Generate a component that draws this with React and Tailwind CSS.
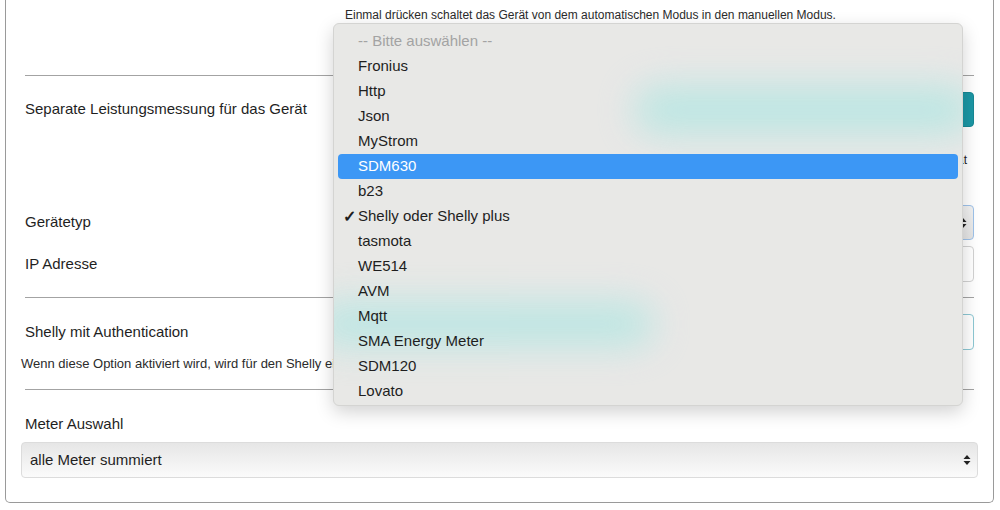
import React from "react";

const options = [
  "-- Bitte auswählen --",
  "Fronius",
  "Http",
  "Json",
  "MyStrom",
  "SDM630",
  "b23",
  "Shelly oder Shelly plus",
  "tasmota",
  "WE514",
  "AVM",
  "Mqtt",
  "SMA Energy Meter",
  "SDM120",
  "Lovato",
];

const Arrows = ({ className = "" }) => (
  <svg width="8" height="12" viewBox="0 0 8 12" className={className}>
    <path d="M4 1 L7.5 5 L0.5 5 Z" fill="#222" />
    <path d="M4 11 L7.5 7 L0.5 7 Z" fill="#222" />
  </svg>
);

const Hr = () => <div className="h-px bg-[#a3a3a3]" />;

const Menu = () => (
  <div className="absolute left-[333px] top-[23px] w-[630px] h-[383px] overflow-hidden rounded-[6px] bg-[#e8e8e6] border border-[#d4d4d2] shadow-[0_6px_18px_rgba(0,0,0,0.18)] pt-[5px]">
    <div className="absolute left-[300px] top-[62px] w-[340px] h-[48px] rounded-full bg-[#b8e6e3] blur-[18px] opacity-90" />
    <div className="absolute left-[-20px] top-[278px] w-[340px] h-[44px] rounded-full bg-[#b8e6e3] blur-[18px] opacity-90" />
    <ul className="relative">
      {options.map((o, i) => {
        const active = o === "SDM630";
        const checked = o === "Shelly oder Shelly plus";
        return (
          <li
            key={o}
            className={`relative mx-[4px] h-[25px] flex items-center pl-[20px] rounded-[4px] text-[15px] ${
              active ? "bg-[#3c97f5] text-white" : i === 0 ? "text-[#a3a3a3]" : "text-[#1e1e1e]"
            }`}
          >
            {checked && <span className="absolute left-[5px] text-[16px] font-bold">✓</span>}
            {o}
          </li>
        );
      })}
    </ul>
  </div>
);

export default function App() {
  return (
    <div
      className="relative w-[1000px] h-[510px] overflow-hidden bg-white text-[#1f1f1f]"
      style={{ fontFamily: '"Liberation Sans", Arial, sans-serif' }}
    >
      <div className="ml-[5px] w-[989px] h-[503px] border-x border-b border-[#9a9a9a] rounded-b-[5px] px-[19px]">
        <div className="h-[75px] pl-[320px] pt-[6px] text-[12px] text-[#2b2b2b]">
          Einmal drücken schaltet das Gerät von dem automatischen Modus in den manuellen Modus.
        </div>
        <Hr />

        <div className="pt-[16px] flex items-center h-[51px]">
          <div className="w-[320px] text-[15px]">Separate Leistungsmessung für das Gerät</div>
          <div className="flex-1 h-[35px] rounded-[4px] bg-[#1b97a5] border border-[#168894]" />
        </div>
        <div className="h-[41px] pt-[25px] text-right pr-[7px] text-[12px] leading-[16px] whitespace-nowrap">
          Aktiviert eine separate Messung der Leistung über das ausgewählte Gerät
        </div>
        <div className="h-[72px] flex items-end">
          <div className="w-full flex items-center h-[35px]">
            <div className="w-[320px] text-[15px]">Gerätetyp</div>
            <div className="flex-1 h-[35px] rounded-[4px] border border-[#9ec2ea] bg-gradient-to-b from-[#f2f2f2] to-[#e4e4e4] flex items-center justify-end pr-[6px]">
              <Arrows />
            </div>
          </div>
        </div>
        <div className="mt-[6px] flex items-center h-[36px]">
          <div className="w-[320px] text-[15px]">IP Adresse</div>
          <div className="flex-1 h-[36px] rounded-[4px] border border-[#d2d2d2] bg-white" />
        </div>
        <div className="h-[15px]" />
        <Hr />

        <div className="mt-[16px] flex items-center h-[36px]">
          <div className="w-[320px] text-[15px]">Shelly mit Authentication</div>
          <div className="flex-1 h-[36px] rounded-[4px] border border-[#8cc7d3] bg-white" />
        </div>
        <div className="-ml-[4px] mt-[6px] h-[33px] text-[13px] leading-[16px] text-[#2b2b2b] whitespace-nowrap">
          Wenn diese Option aktiviert wird, wird für den Shelly eine Authentifizierung verwendet.
        </div>
        <Hr />

        <div className="pt-[25px] h-[52px] text-[15px] leading-[18px]">Meter Auswahl</div>
        <div className="-ml-[4px] w-[957px] h-[36px] rounded-[4px] border border-[#dcdcdc] bg-gradient-to-b from-[#e6e6e6] to-[#fbfbfb] flex items-center justify-between pl-[8px] pr-[6px] text-[15px]">
          <span>alle Meter summiert</span>
          <Arrows />
        </div>
      </div>

      <Menu />
    </div>
  );
}
